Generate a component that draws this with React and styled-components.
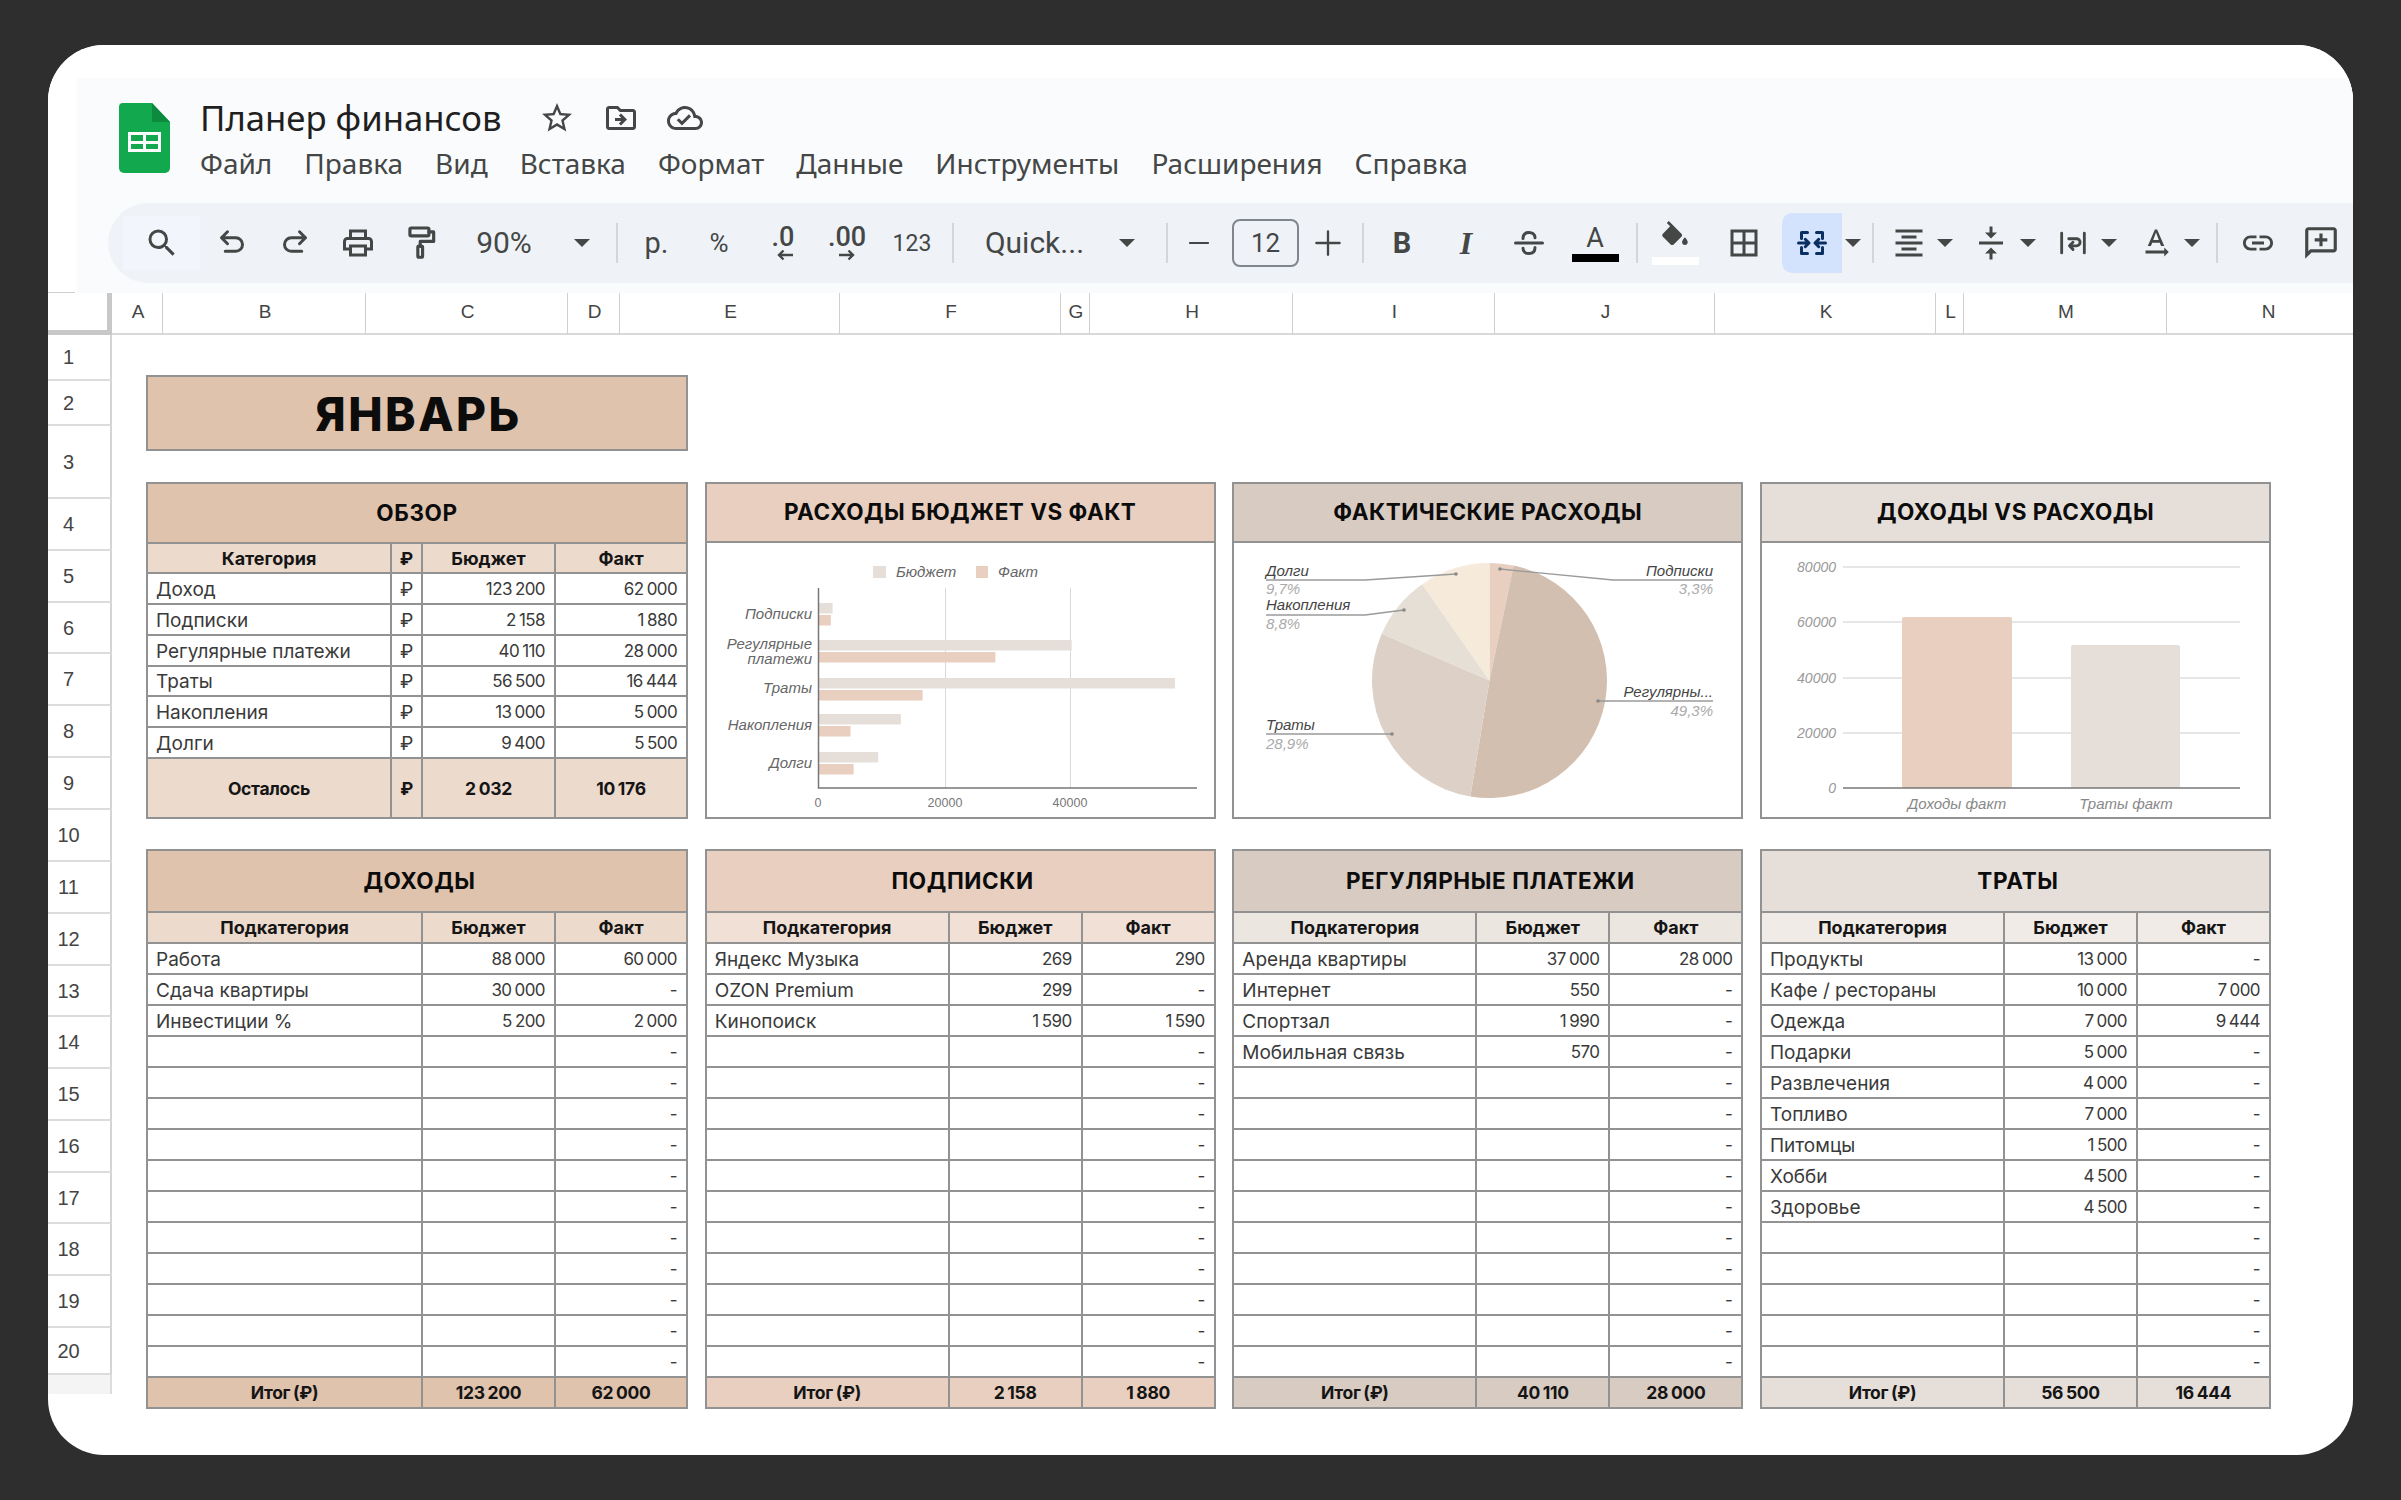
import React from 'react';
import styled, { createGlobalStyle } from 'styled-components';

const Global = createGlobalStyle`
  html, body { margin: 0; padding: 0; background: #2e2e2e; }
  #root { width: 2401px; height: 1500px; overflow: hidden; }
  * { box-sizing: border-box; }
`;

const Page = styled.div`
  width: 2401px; height: 1500px; padding: 45px 48px; background: #2e2e2e;
`;
const Window = styled.div`
  width: 2305px; height: 1410px; background: #fff; border-radius: 56px; overflow: hidden;
`;
const HeadShell = styled.div` padding: 33px 0 0 29px; background: #fff; `;
const Head = styled.header`
  height: 215px; background: #f9fbfd; padding: 20px 0 10px 31px;
`;
const TopRow = styled.div` display: flex; gap: 30px; padding-left: 11px; height: 105px; `;
const LogoBox = styled.div` width: 51px; height: 70px; margin-top: 5px; flex: none; svg { display: block; } `;
const TitleBlock = styled.div` display: flex; flex-direction: column; `;
const TitleLine = styled.div` display: flex; align-items: center; height: 40px; `;
const DocTitle = styled.div`
  font: 400 34.7px/40px "Noto Sans", sans-serif; color: #1f1f1f; width: 325px; white-space: nowrap;
`;
const TitleIcon = styled.span`
  display: flex; width: 64px; justify-content: center; color: #444746;
`;
const Menu = styled.nav` display: flex; gap: 32px; margin-top: 5px; `;
const MenuItem = styled.span`
  font: 400 28px/40px "Noto Sans", sans-serif; color: #444746; white-space: nowrap;
`;
const Toolbar = styled.div`
  display: flex; align-items: center; height: 80px; padding-left: 15px;
  background: #eff3f8; border-radius: 40px 0 0 40px; overflow: hidden;
`;
const Tool = styled.div`
  flex: none; width: ${p => p.$w}px; margin-left: ${p => p.$ml || 0}px; height: 54px;
  display: flex; align-items: center; justify-content: center; color: #444746;
  background: ${p => p.$bg || 'transparent'};
  border-radius: ${p => p.$r || '0'};
  svg { display: block; }
`;
const MergeTool = styled(Tool)` height: 60px; `;
const ToolText = styled.span`
  font: ${p => p.$weight || 400} ${p => p.$size || 26}px/1 Roboto, sans-serif; color: #444746; white-space: nowrap;
`;
const SerifI = styled.span`
  font: italic 700 32px/1 "Liberation Serif", serif; color: #444746;
`;
const Caret = styled.i`
  display: block; width: 0; height: 0; border-left: 8px solid transparent; border-right: 8px solid transparent;
  border-top: 8px solid #444746;
`;
const Sep = styled.i` display: block; width: 2px; height: 40px; background: #d3d6da; `;
const FontSizeBox = styled.div`
  flex: none; width: 67px; height: 48px; margin-left: 22px; border: 2px solid #80868b; border-radius: 8px;
  display: flex; align-items: center; justify-content: center;
`;
const StackIcon = styled.div` display: flex; flex-direction: column; align-items: center; `;
const DecimalIcon = styled.div` display: flex; flex-direction: column; align-items: ${p => p.$end ? 'flex-end' : 'center'}; line-height: 1; `;
const DecimalText = styled.span` font: 500 27px/24px Roboto, sans-serif; color: #444746; `;
const ColorBar = styled.i`
  display: block; width: ${p => p.$w}px; height: 8px; background: ${p => p.$c}; margin-top: 2px;
`;
const LetterA = styled.span` font: 400 27px/28px Roboto, sans-serif; color: #444746; `;

const ColStrip = styled.div` display: flex; height: 42px; background: #fff; `;
const Corner = styled.div`
  position: relative; flex: none; width: 64px; height: 42px;
  border-right: 5px solid #c8c8c8; border-bottom: 5px solid #c8c8c8;
  &::before { content: ""; position: absolute; left: 0; top: -1px; width: 27px; height: 1px; background: #cfcfcf; }
`;
const ColHead = styled.div`
  flex: none; width: ${p => p.$w}px; height: 42px; display: flex; align-items: center; justify-content: center;
  padding: 0 0 3px 2px;
  font: 400 19px/1 "Liberation Sans", sans-serif; color: #444;
  border-right: 1px solid #cfcfcf; border-bottom: 2px solid #d9d9d9;
`;
const Sheet = styled.div` display: flex; `;
const RowHeads = styled.div` flex: none; width: 64px; `;
const RowHead = styled.div`
  height: ${p => p.$h}px; display: flex; align-items: center; justify-content: center; padding-right: 21px;
  font: 400 20px/1 "Liberation Sans", sans-serif; color: #444;
  border-right: 2px solid #d4d4d4; border-bottom: 2px solid #dcdcdc;
`;
const RowTail = styled.div` height: 19px; background: #f4f4f4; border-right: 2px solid #dcdcdc; `;
const Canvas = styled.main` flex: 1; padding: 40px 0 0 34px; `;
const MonthBanner = styled.div`
  width: 542px; height: 76px; padding: 2px 0 0 3px; background: #e0c3ac; border: 2px solid #929292;
  display: flex; align-items: center; justify-content: center;
  font: 800 46px/1 Inter, sans-serif; letter-spacing: 2.5px; color: #0c0c0c;
`;
const Grid = styled.div`
  display: grid; grid-template-columns: 542px 511px 511px 511px; column-gap: 16.67px; margin-top: 31px;
  align-items: start;
`;
const BottomGrid = styled(Grid)` margin-top: 30px; `;
const Table = styled.table`
  width: 100%; table-layout: fixed; border-collapse: separate; border-spacing: 0;
  border-left: 2px solid #929292; border-top: 2px solid #929292;
  font-family: Inter, sans-serif; color: #3a3a3a;
`;
const Col = styled.col` width: ${p => p.$w}px; `;
const Row = styled.tr` height: ${p => p.$h}px; `;
const TitleCell = styled.th`
  background: ${p => p.$bg}; border-right: 2px solid #929292; border-bottom: 2px solid #929292; padding: 0;
  font: 700 22.5px/1 Inter, sans-serif; letter-spacing: .6px; color: #0c0c0c; text-align: center; white-space: nowrap;
`;
const BudgetTitle = styled(TitleCell)` padding-left: 5px; `;
const HeadCell = styled.th`
  background: ${p => p.$bg}; border-right: 2px solid #929292; border-bottom: 2px solid #929292; padding: 1px 4px 0;
  font: 700 18px/1 Inter, sans-serif; color: #151515; text-align: center; white-space: nowrap;
`;
const Cell = styled.td`
  border-right: 2px solid #929292; border-bottom: 2px solid #929292; padding: 1px 9px 0 8px; white-space: nowrap; overflow: hidden;
  font: 400 ${p => p.$num ? 17 : 19}px/1 Inter, sans-serif; color: #3a3a3a;
  text-align: ${p => (p.$num ? 'right' : p.$mid ? 'center' : 'left')};
  word-spacing: ${p => p.$num ? '-1px' : '0'};
  letter-spacing: ${p => p.$num ? '-.6px' : '0'};
`;
const TotalCell = styled.td`
  background: ${p => p.$bg}; border-right: 2px solid #929292; border-bottom: 2px solid #929292; padding: 1px 4px 0;
  white-space: nowrap;
  font: 700 17.5px/1 Inter, sans-serif; color: #151515; text-align: center;
  word-spacing: -1px; letter-spacing: -.3px;
`;
const ChartCard = styled.section`
  height: 337px; border: 2px solid #929292; background: #fff; overflow: hidden;
`;
const ChartTitle = styled.h2`
  margin: 0; height: 59px; background: ${p => p.$bg}; border-bottom: 2px solid #929292;
  display: flex; align-items: center; justify-content: center;
  font: 700 22.5px/1 Inter, sans-serif; letter-spacing: .5px; color: #0c0c0c; white-space: nowrap;
`;
const ChartSvg = styled.svg` display: block; width: 507px; height: 274px; `;
const Label = styled.text`
  font: italic 400 ${p => p.$s || 15}px "Liberation Sans", sans-serif;
  fill: ${p => p.$c || '#666'};
  text-anchor: ${p => p.$a || 'start'};
`;
const Tick = styled.text`
  font: 400 12.5px "Liberation Sans", sans-serif; fill: #777; text-anchor: middle;
`;

const I = ({ s = 36, d, fill = 'currentColor' }) => (
  <svg width={s} height={s} viewBox="0 0 24 24" fill={fill} aria-hidden="true"><path d={d} /></svg>
);
const St = ({ s = 36, c = 'currentColor', w = 2, children }) => (
  <svg width={s} height={s} viewBox="0 0 24 24" fill="none" stroke={c} strokeWidth={w} strokeLinecap="round" strokeLinejoin="round" aria-hidden="true">{children}</svg>
);
const P = {
  star: 'M22 9.24l-7.19-.62L12 2 9.19 8.63 2 9.24l5.46 4.73L5.82 21 12 17.27 18.18 21l-1.63-7.03L22 9.24zM12 15.4l-3.76 2.27 1-4.28-3.32-2.88 4.38-.38L12 6.1l1.71 4.04 4.38.38-3.32 2.88 1 4.28L12 15.4z',
  move: 'M20 6h-8l-2-2H4c-1.1 0-1.99.9-1.99 2L2 18c0 1.1.9 2 2 2h16c1.1 0 2-.9 2-2V8c0-1.1-.9-2-2-2zm0 12H4V6h5.17l2 2H20v10zm-8.01-9l-1.41 1.41L12.16 12H8v2h4.16l-1.59 1.59L11.99 17 16 13.01 11.99 9z',
  cloud: 'M19.35 10.04C18.67 6.59 15.64 4 12 4 9.11 4 6.6 5.64 5.35 8.04 2.34 8.36 0 10.91 0 14c0 3.31 2.69 6 6 6h13c2.76 0 5-2.24 5-5 0-2.64-2.05-4.78-4.65-4.96zM19 18H6c-2.21 0-4-1.79-4-4 0-2.05 1.53-3.76 3.56-3.97l1.07-.11.5-.95C8.08 7.14 9.94 6 12 6c2.62 0 4.88 1.86 5.39 4.43l.3 1.5 1.53.11c1.56.1 2.78 1.41 2.78 2.96 0 1.65-1.35 3-3 3zm-9-3.82l-2.09-2.09L6.5 13.5 10 17l6.01-6.01-1.41-1.41z',
  search: 'M15.5 14h-.79l-.28-.27A6.471 6.471 0 0 0 16 9.5 6.5 6.5 0 1 0 9.5 16c1.61 0 3.09-.59 4.23-1.57l.27.28v.79l5 4.99L20.49 19l-4.99-5zm-6 0C7.01 14 5 11.99 5 9.5S7.01 5 9.5 5 14 7.01 14 9.5 11.99 14 9.5 14z',
  print: 'M19 8h-1V3H6v5H5c-1.66 0-3 1.34-3 3v6h4v4h12v-4h4v-6c0-1.66-1.34-3-3-3zM8 5h8v3H8V5zm8 12v2H8v-4h8v2zm2-2v-2H6v2H4v-4c0-.55.45-1 1-1h14c.55 0 1 .45 1 1v4h-2z',
  border: 'M3 3v18h18V3H3zm8 16H5v-6h6v6zm0-8H5V5h6v6zm8 8h-6v-6h6v6zm0-8h-6V5h6v6z',
  fill: 'M16.56 8.94 7.62 0 6.21 1.41l2.38 2.38-5.15 5.15c-.59.59-.59 1.54 0 2.12l5.5 5.5c.29.29.68.44 1.06.44s.77-.15 1.06-.44l5.5-5.5c.59-.58.59-1.53 0-2.12zM19 11.5s-2 2.17-2 3.5c0 1.1.9 2 2 2s2-.9 2-2c0-1.33-2-3.5-2-3.5z',
  align: 'M7 15v2h10v-2H7zm-4 6h18v-2H3v2zm0-8h18v-2H3v2zm4-6v2h10V7H7zM3 3v2h18V3H3z',
  valign: 'M8 19h3v4h2v-4h3l-4-4-4 4zm8-14h-3V1h-2v4H8l4 4 4-4zM4 11v2h16v-2H4z',
  rotate: 'M12.75 3h-1.5L6.5 14h2.1l.9-2.2h5l.9 2.2h2.1L12.75 3zm-2.62 7L12 4.98 13.87 10h-3.74zm10.37 8l-3-3v2H5v2h12.5v2l3-3z',
  link: 'M3.9 12c0-1.71 1.39-3.1 3.1-3.1h4V7H7c-2.76 0-5 2.24-5 5s2.24 5 5 5h4v-1.9H7c-1.71 0-3.1-1.39-3.1-3.1zM8 13h8v-2H8v2zm9-6h-4v1.9h4c1.71 0 3.1 1.39 3.1 3.1s-1.39 3.1-3.1 3.1h-4V17h4c2.76 0 5-2.24 5-5s-2.24-5-5-5z',
  comment: 'M20 2H4c-1.1 0-1.99.9-1.99 2L2 22l4-4h14c1.1 0 2-.9 2-2V4c0-1.1-.9-2-2-2zm0 14H5.17L4 17.17V4h16v12zm-9-2h2v-3h3V9h-3V6h-2v3H8v2h3v3z',
};

const Logo = () => (
  <svg width="51" height="70" viewBox="0 0 51 70" aria-hidden="true">
    <path d="M4 0H33L51 19V65a5 5 0 0 1-5 5H5a5 5 0 0 1-5-5V4a4 4 0 0 1 4-4z" fill="#12a84e" />
    <path d="M33 0L51 19H33z" fill="#0c8a3d" />
    <path fillRule="evenodd" d="M9 29H42V49H9zM12 32V38H24V32zM27 32V38H39V32zM12 41V46H24V41zM27 41V46H39V41z" fill="#fff" />
  </svg>
);

const Arrow = ({ left }) => (
  <svg width="18" height="12" viewBox="0 0 18 12" fill="none" stroke="#444746" strokeWidth="2.4" aria-hidden="true">
    {left ? <path d="M17 6H3M7.5 1.5L3 6l4.5 4.5" /> : <path d="M1 6h14M10.5 1.5L15 6l-4.5 4.5" />}
  </svg>
);

const TopBar = () => (
  <Head>
    <TopRow>
      <LogoBox><Logo /></LogoBox>
      <TitleBlock>
        <TitleLine>
          <DocTitle>Планер финансов</DocTitle>
          <TitleIcon><I d={P.star} /></TitleIcon>
          <TitleIcon><I d={P.move} /></TitleIcon>
          <TitleIcon><I d={P.cloud} /></TitleIcon>
        </TitleLine>
        <Menu>
          {['Файл', 'Правка', 'Вид', 'Вставка', 'Формат', 'Данные', 'Инструменты', 'Расширения', 'Справка'].map(m => <MenuItem key={m}>{m}</MenuItem>)}
        </Menu>
      </TitleBlock>
    </TopRow>
    <Toolbar>
      <Tool $w={77} $bg="#f2f5fb"><I d={P.search} /></Tool>
      <Tool $w={63}><St s={36}><path d="M9 4.5L5 8.5l4 4M5 8.5h9.5a4.5 4.5 0 0 1 0 9H7.5" /></St></Tool>
      <Tool $w={63}><St s={36}><path d="M15 4.5l4 4-4 4M19 8.5H9.5a4.5 4.5 0 0 0 0 9H16.5" /></St></Tool>
      <Tool $w={63}><I d={P.print} /></Tool>
      <Tool $w={63}><St s={38}><rect x="5" y="2.5" width="12" height="5" rx=".8" /><path d="M17 5h3v6h-8.5v3" /><rect x="10" y="14" width="3" height="7" rx=".8" /></St></Tool>
      <Tool $w={104}><ToolText $size={30}>90%</ToolText></Tool>
      <Tool $w={52}><Caret /></Tool>
      <Tool $w={18}><Sep /></Tool>
      <Tool $w={61}><ToolText $size={29}>р.</ToolText></Tool>
      <Tool $w={64}><ToolText>%</ToolText></Tool>
      <Tool $w={64}><DecimalIcon $end><DecimalText>.0</DecimalText><Arrow left /></DecimalIcon></Tool>
      <Tool $w={64}><DecimalIcon><DecimalText>.00</DecimalText><Arrow /></DecimalIcon></Tool>
      <Tool $w={66}><ToolText $size={23}>123</ToolText></Tool>
      <Tool $w={16}><Sep /></Tool>
      <Tool $w={147}><ToolText $size={30}>Quick...</ToolText></Tool>
      <Tool $w={38}><Caret /></Tool>
      <Tool $w={42}><Sep /></Tool>
      <Tool $w={22}><St s={26}><path d="M2 12h20" /></St></Tool>
      <FontSizeBox><ToolText $size={26}>12</ToolText></FontSizeBox>
      <Tool $w={58}><St s={28}><path d="M2 12h20M12 2v20" /></St></Tool>
      <Tool $w={12}><Sep /></Tool>
      <Tool $w={66}><ToolText $weight={700} $size={29}>B</ToolText></Tool>
      <Tool $w={62}><SerifI>I</SerifI></Tool>
      <Tool $w={64}><St s={36}><path d="M3 12h18M8 9c0-3 2-4 4-4s4 1 4 3.5M8 15.5C8.200 18 10 19 12 19s4-1 4-4" /></St></Tool>
      <Tool $w={68}><StackIcon><LetterA>A</LetterA><ColorBar $w={47} $c="#000" /></StackIcon></Tool>
      <Tool $w={16}><Sep /></Tool>
      <Tool $w={60}><StackIcon><I s={34} d={P.fill} /><ColorBar $w={47} $c="#fff" /></StackIcon></Tool>
      <Tool $w={77}><I d={P.border} /></Tool>
      <MergeTool $w={60} $bg="#d3e3fd" $r="10px 0 0 10px">
        <St s={36} c="#0b2f63" w={2}><path d="M5 9V5h4M5 15v4h4M19 9V5h-4M19 15v4h-4M3 12h7M7.500 9.500L10 12l-2.500 2.500M21 12h-7M16.500 9.500L14 12l2.500 2.500" /></St>
      </MergeTool>
      <Tool $w={22}><Caret /></Tool>
      <Tool $w={18}><Sep /></Tool>
      <Tool $w={54}><I d={P.align} /></Tool>
      <Tool $w={18}><Caret /></Tool>
      <Tool $w={58} $ml={8}><I d={P.valign} /></Tool>
      <Tool $w={16}><Caret /></Tool>
      <Tool $w={56} $ml={9}><St s={34}><path d="M4 5v14M20 5v14M9 9h5.500a2.500 2.500 0 0 1 0 5H9.500M12 11.500L9.500 14l2.500 2.500" /></St></Tool>
      <Tool $w={16}><Caret /></Tool>
      <Tool $w={56} $ml={11}><I d={P.rotate} /></Tool>
      <Tool $w={16}><Caret /></Tool>
      <Tool $w={33}><Sep /></Tool>
      <Tool $w={62} $ml={-6}><I d={P.link} /></Tool>
      <Tool $w={60} $ml={2}><I s={38} d={P.comment} /></Tool>
    </Toolbar>
  </Head>
);

const columns = [['A', 51], ['B', 203], ['C', 202], ['D', 52], ['E', 220], ['F', 221], ['G', 29], ['H', 203], ['I', 202], ['J', 220], ['K', 221], ['L', 28], ['M', 203], ['N', 202]];
const rowHeights = [46, 45, 73, 52, 52, 51, 52, 52, 52, 52, 52, 52, 51, 52, 52, 52, 51, 52, 52, 47];

const T1 = { title: '#e0c3ac', head: '#ecdacd', total: '#e0c3ac' };
const T2 = { title: '#e8cfc0', head: '#f0e0d6', total: '#e8cfc0' };
const T3 = { title: '#d8cbc2', head: '#ece6e0', total: '#d8cbc2' };
const T4 = { title: '#e6dfd9', head: '#f0ebe6', total: '#e6dfd9' };

const overview = [
  ['Доход', '123 200', '62 000'], ['Подписки', '2 158', '1 880'], ['Регулярные платежи', '40 110', '28 000'],
  ['Траты', '56 500', '16 444'], ['Накопления', '13 000', '5 000'], ['Долги', '9 400', '5 500'],
];

const Overview = () => (
  <Table>
    <colgroup><Col $w={244} /><Col $w={31} /><Col $w={133} /><Col $w={132} /></colgroup>
    <tbody>
      <Row $h={60}><TitleCell colSpan={4} $bg={T1.title}>ОБЗОР</TitleCell></Row>
      <Row $h={30}>
        <HeadCell $bg={T1.head}>Категория</HeadCell><HeadCell $bg={T1.head}>₽</HeadCell>
        <HeadCell $bg={T1.head}>Бюджет</HeadCell><HeadCell $bg={T1.head}>Факт</HeadCell>
      </Row>
      {overview.map((r, i) => (
        <Row $h={i === 3 ? 30 : 31} key={r[0]}><Cell>{r[0]}</Cell><Cell $mid>₽</Cell><Cell $num>{r[1]}</Cell><Cell $num>{r[2]}</Cell></Row>
      ))}
      <Row $h={60}>
        <TotalCell $bg={T1.head}>Осталось</TotalCell><TotalCell $bg={T1.head}>₽</TotalCell>
        <TotalCell $bg={T1.head}>2 032</TotalCell><TotalCell $bg={T1.head}>10 176</TotalCell>
      </Row>
    </tbody>
  </Table>
);

const Budget = ({ tone, title, first, widths, rows, total }) => {
  const filled = [...rows, ...Array(14 - rows.length).fill(['', '', '-'])];
  return (
    <Table>
      <colgroup><Col $w={widths[0]} /><Col $w={widths[1]} /><Col $w={widths[2]} /></colgroup>
      <tbody>
        <Row $h={62}><BudgetTitle colSpan={3} $bg={tone.title}>{title}</BudgetTitle></Row>
        <Row $h={31}>
          <HeadCell $bg={tone.head}>{first}</HeadCell><HeadCell $bg={tone.head}>Бюджет</HeadCell><HeadCell $bg={tone.head}>Факт</HeadCell>
        </Row>
        {filled.map((r, i) => (
          <Row $h={31} key={i}><Cell>{r[0]}</Cell><Cell $num>{r[1]}</Cell><Cell $num>{r[2]}</Cell></Row>
        ))}
        <Row $h={31}>
          <TotalCell $bg={tone.total}>Итог (₽)</TotalCell><TotalCell $bg={tone.total}>{total[0]}</TotalCell><TotalCell $bg={tone.total}>{total[1]}</TotalCell>
        </Row>
      </tbody>
    </Table>
  );
};

const barRows = [
  ['Подписки', 603, 2158, 1880], ['Регулярные', 640, 40110, 28000], ['Траты', 678, 56500, 16444],
  ['Накопления', 714, 13000, 5000], ['Долги', 752, 9400, 5500],
];
const BUDGET_C = '#e6dfd9';
const FACT_C = '#e8cfc0';

const BudgetChart = () => (
  <ChartSvg viewBox="707 543 507 274">
    <rect x="873" y="566" width="13" height="12" fill={BUDGET_C} />
    <Label x="896" y="577">Бюджет</Label>
    <rect x="976" y="566" width="12" height="12" fill={FACT_C} />
    <Label x="998" y="577">Факт</Label>
    <line x1="945.500" x2="945.500" y1="588" y2="788" stroke="#d9d9d9" />
    <line x1="1070.500" x2="1070.500" y1="588" y2="788" stroke="#d9d9d9" />
    {barRows.map(([n, y, b, f]) => (
      <g key={n}>
        <rect x="819" y={y} width={b * 0.0063} height="10.500" fill={BUDGET_C} />
        <rect x="819" y={y + 12} width={f * 0.0063} height="10.500" fill={FACT_C} />
      </g>
    ))}
    <path d="M818.500 588V788H1197" fill="none" stroke="#777" strokeWidth="1.500" />
    <Label x="812" y="619" $a="end">Подписки</Label>
    <Label x="812" y="649" $a="end">Регулярные</Label>
    <Label x="812" y="664" $a="end">платежи</Label>
    <Label x="812" y="693" $a="end">Траты</Label>
    <Label x="812" y="730" $a="end">Накопления</Label>
    <Label x="812" y="768" $a="end">Долги</Label>
    <Tick x="818" y="807">0</Tick>
    <Tick x="945" y="807">20000</Tick>
    <Tick x="1070" y="807">40000</Tick>
  </ChartSvg>
);

const slices = [[3.3, '#e8cfc0'], [49.3, '#d3bfaf'], [28.9, '#ddd0c6'], [8.8, '#e6dfd6'], [9.7, '#f6eadb']];
const pt = (pct, r, cx, cy) => {
  const a = (pct / 100) * 2 * Math.PI - Math.PI / 2;
  return [cx + r * Math.cos(a), cy + r * Math.sin(a)];
};
const PieChart = () => {
  let acc = 0;
  const cx = 1490.500, cy = 680.500, r = 117.500;
  return (
    <ChartSvg viewBox="1235 543 507 274">
      {slices.map(([v, c]) => {
        const [x1, y1] = pt(acc, r, cx, cy);
        acc += v;
        const [x2, y2] = pt(acc, r, cx, cy);
        return <path key={c} d={`M${cx} ${cy}L${x1} ${y1}A${r} ${r} 0 ${v > 50 ? 1 : 0} 1 ${x2} ${y2}Z`} fill={c} />;
      })}
      <g fill="none" stroke="#9a9a9a" strokeWidth="1.300">
        <path d="M1267 580H1366L1457 574" />
        <path d="M1267 615H1366L1405 610" />
        <path d="M1267 734H1393" />
        <path d="M1714 580H1614L1501 569" />
        <path d="M1714 701H1599" />
      </g>
      <g fill="#888">
        <circle cx="1457" cy="574" r="1.800" /><circle cx="1405" cy="610" r="1.800" /><circle cx="1393" cy="734" r="1.800" />
        <circle cx="1501" cy="569" r="1.800" /><circle cx="1599" cy="701" r="1.800" />
      </g>
      <Label x="1267" y="576" $c="#444">Долги</Label>
      <Label x="1267" y="594" $c="#aaa">9,7%</Label>
      <Label x="1267" y="610" $c="#444">Накопления</Label>
      <Label x="1267" y="629" $c="#aaa">8,8%</Label>
      <Label x="1267" y="730" $c="#444">Траты</Label>
      <Label x="1267" y="749" $c="#aaa">28,9%</Label>
      <Label x="1714" y="576" $c="#444" $a="end">Подписки</Label>
      <Label x="1714" y="594" $c="#aaa" $a="end">3,3%</Label>
      <Label x="1714" y="697" $c="#444" $a="end">Регулярны...</Label>
      <Label x="1714" y="716" $c="#aaa" $a="end">49,3%</Label>
    </ChartSvg>
  );
};

const IncomeChart = () => (
  <ChartSvg viewBox="1762 543 507 274">
    {[[567, '80000'], [622, '60000'], [678, '40000'], [733, '20000']].map(([y, t]) => (
      <g key={t}>
        <line x1="1843" x2="2240" y1={y} y2={y} stroke="#e6e6e6" strokeWidth="2" />
        <Label x="1836" y={y + 5} $s={14} $c="#999" $a="end">{t}</Label>
      </g>
    ))}
    <Label x="1836" y="793" $s={14} $c="#999" $a="end">0</Label>
    <rect x="1902" y="617" width="110" height="171" rx="2" fill="#e8cfc0" />
    <rect x="2071" y="645" width="109" height="143" rx="2" fill="#e6dfd9" />
    <line x1="1843" x2="2240" y1="788" y2="788" stroke="#777" strokeWidth="1.600" />
    <Label x="1957" y="809" $a="middle" $c="#888">Доходы факт</Label>
    <Label x="2126" y="809" $a="middle" $c="#888">Траты факт</Label>
  </ChartSvg>
);

export default function App() {
  return (
    <>
      <Global />
      <Page>
        <Window>
          <HeadShell><TopBar /></HeadShell>
          <ColStrip>
            <Corner />
            {columns.map(([c, w]) => <ColHead key={c} $w={w}>{c}</ColHead>)}
          </ColStrip>
          <Sheet>
            <RowHeads>
              {rowHeights.map((h, i) => <RowHead key={i} $h={h}>{i + 1}</RowHead>)}
              <RowTail />
            </RowHeads>
            <Canvas>
              <MonthBanner>ЯНВАРЬ</MonthBanner>
              <Grid>
                <Overview />
                <ChartCard><ChartTitle $bg={T2.title}>РАСХОДЫ БЮДЖЕТ VS ФАКТ</ChartTitle><BudgetChart /></ChartCard>
                <ChartCard><ChartTitle $bg={T3.title}>ФАКТИЧЕСКИЕ РАСХОДЫ</ChartTitle><PieChart /></ChartCard>
                <ChartCard><ChartTitle $bg={T4.title}>ДОХОДЫ VS РАСХОДЫ</ChartTitle><IncomeChart /></ChartCard>
              </Grid>
              <BottomGrid>
                <Budget tone={T1} title="ДОХОДЫ" first="Подкатегория" widths={[275, 133, 132]} total={['123 200', '62 000']}
                  rows={[['Работа', '88 000', '60 000'], ['Сдача квартиры', '30 000', '-'], ['Инвестиции %', '5 200', '2 000']]} />
                <Budget tone={T2} title="ПОДПИСКИ" first="Подкатегория" widths={[243, 133, 133]} total={['2 158', '1 880']}
                  rows={[['Яндекс Музыка', '269', '290'], ['OZON Premium', '299', '-'], ['Кинопоиск', '1 590', '1 590']]} />
                <Budget tone={T3} title="РЕГУЛЯРНЫЕ ПЛАТЕЖИ" first="Подкатегория" widths={[243, 133, 133]} total={['40 110', '28 000']}
                  rows={[['Аренда квартиры', '37 000', '28 000'], ['Интернет', '550', '-'], ['Спортзал', '1 990', '-'], ['Мобильная связь', '570', '-']]} />
                <Budget tone={T4} title="ТРАТЫ" first="Подкатегория" widths={[243, 133, 133]} total={['56 500', '16 444']}
                  rows={[['Продукты', '13 000', '-'], ['Кафе / рестораны', '10 000', '7 000'], ['Одежда', '7 000', '9 444'], ['Подарки', '5 000', '-'], ['Развлечения', '4 000', '-'], ['Топливо', '7 000', '-'], ['Питомцы', '1 500', '-'], ['Хобби', '4 500', '-'], ['Здоровье', '4 500', '-']]} />
              </BottomGrid>
            </Canvas>
          </Sheet>
        </Window>
      </Page>
    </>
  );
}
